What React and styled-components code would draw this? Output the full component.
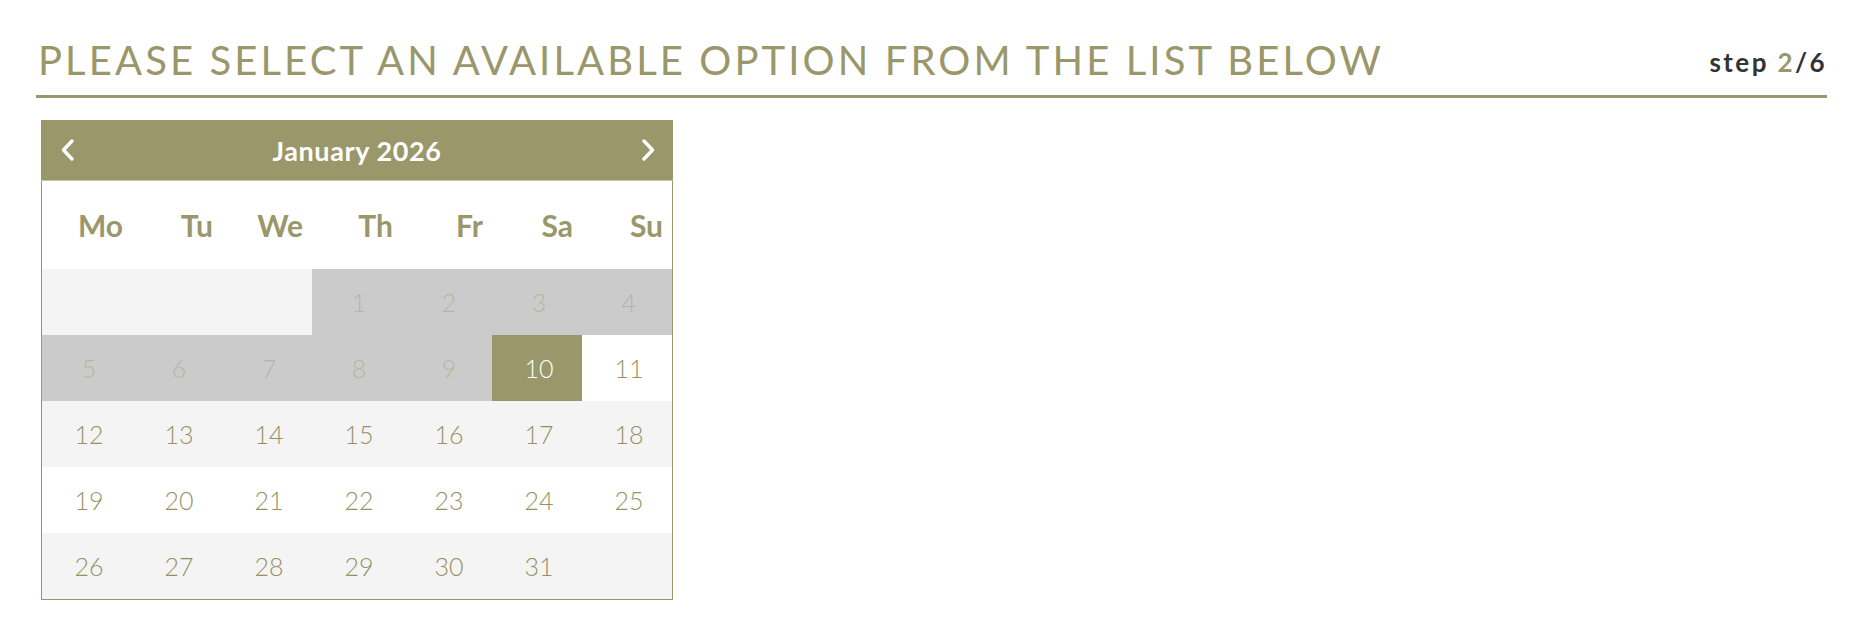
import React from 'react'
import styled, { createGlobalStyle } from 'styled-components'

const olive = '#9a976a'

const GlobalStyle = createGlobalStyle`
  body {
    margin: 0;
    background: #fff;
    font-family: 'Lato', 'Liberation Sans', sans-serif;
  }
`

const Page = styled.div`
  padding: 0 31px 0 36px;
`

const Heading = styled.div`
  display: flex;
  justify-content: space-between;
  align-items: flex-end;
  margin-top: 36px;
  padding-bottom: 11px;
  border-bottom: 3px solid ${olive};
`

const Title = styled.h1`
  margin: 0 0 0 2px;
  font-size: 40px;
  line-height: 48px;
  font-weight: 400;
  letter-spacing: 3.1px;
  text-transform: uppercase;
  color: ${olive};
`

const Step = styled.div`
  font-size: 26px;
  line-height: 44px;
  font-weight: 700;
  letter-spacing: 2.4px;
  color: #333;

  span {
    color: ${olive};
  }
`

const Calendar = styled.div`
  box-sizing: border-box;
  width: 632px;
  margin: 22px 0 0 5px;
  border: 1px solid ${olive};
`

const MonthBar = styled.div`
  display: grid;
  grid-template-columns: 50px 1fr 50px;
  align-items: center;
  height: 60px;
  margin: -1px -1px 0;
  background: ${olive};
  border-bottom: 1px solid #c4c3ad;
  color: #fff;
`

const MonthTitle = styled.div`
  text-align: center;
  font-size: 27px;
  font-weight: 700;
  letter-spacing: 0.6px;
`

const NavButton = styled.button`
  display: flex;
  align-items: center;
  justify-content: ${p => (p.$next ? 'flex-end' : 'flex-start')};
  padding: 0 ${p => (p.$next ? '17px' : '0')} 0 ${p => (p.$next ? '0' : '19px')};
  border: 0;
  background: none;
  cursor: pointer;
`

const Grid = styled.div`
  display: grid;
  grid-template-columns: repeat(7, 90px);
`

const DayName = styled.div`
  height: 88px;
  display: flex;
  align-items: center;
  justify-content: flex-end;
  padding-right: 9px;
  font-size: 30px;
  font-weight: 700;
  color: ${olive};
`

const cellBg = p => {
  if (p.$state === 'selected') return olive
  if (p.$state === 'disabled') return '#cbcbcb'
  return p.$striped ? '#f4f4f4' : '#fff'
}

const cellColor = p => {
  if (p.$state === 'selected') return '#fff'
  if (p.$state === 'disabled') return '#b7b69c'
  return '#959262'
}

const Cell = styled.div`
  height: 66px;
  display: flex;
  align-items: center;
  justify-content: center;
  padding-left: 4px;
  font-size: 25px;
  font-weight: 300;
  background: ${cellBg};
  color: ${cellColor};
`

const Chevron = ({ dir }) => (
  <svg width="15" height="22" viewBox="0 0 15 22" fill="none">
    <path
      d={dir === 'left' ? 'M12 2 L3.5 11 L12 20' : 'M3 2 L11.5 11 L3 20'}
      stroke="#fff"
      strokeWidth="3.4"
      strokeLinecap="round"
      strokeLinejoin="round"
    />
  </svg>
)

const dayNames = ['Mo', 'Tu', 'We', 'Th', 'Fr', 'Sa', 'Su']

// January 2026 starts on a Thursday
const weeks = [
  [null, null, null, 1, 2, 3, 4],
  [5, 6, 7, 8, 9, 10, 11],
  [12, 13, 14, 15, 16, 17, 18],
  [19, 20, 21, 22, 23, 24, 25],
  [26, 27, 28, 29, 30, 31, null],
]

const stateOf = d => {
  if (d === null) return 'empty'
  if (d === 10) return 'selected'
  if (d < 10) return 'disabled'
  return 'open'
}

export default function App() {
  return (
    <Page>
      <GlobalStyle />
      <Heading>
        <Title>Please select an available option from the list below</Title>
        <Step>
          step <span>2</span>/6
        </Step>
      </Heading>
      <Calendar>
        <MonthBar>
          <NavButton aria-label="previous month">
            <Chevron dir="left" />
          </NavButton>
          <MonthTitle>January 2026</MonthTitle>
          <NavButton $next aria-label="next month">
            <Chevron dir="right" />
          </NavButton>
        </MonthBar>
        <Grid>
          {dayNames.map(n => (
            <DayName key={n}>{n}</DayName>
          ))}
          {weeks.map((week, wi) =>
            week.map((d, di) => (
              <Cell key={`${wi}-${di}`} $striped={wi % 2 === 0} $state={stateOf(d)}>
                {d}
              </Cell>
            ))
          )}
        </Grid>
      </Calendar>
    </Page>
  )
}
